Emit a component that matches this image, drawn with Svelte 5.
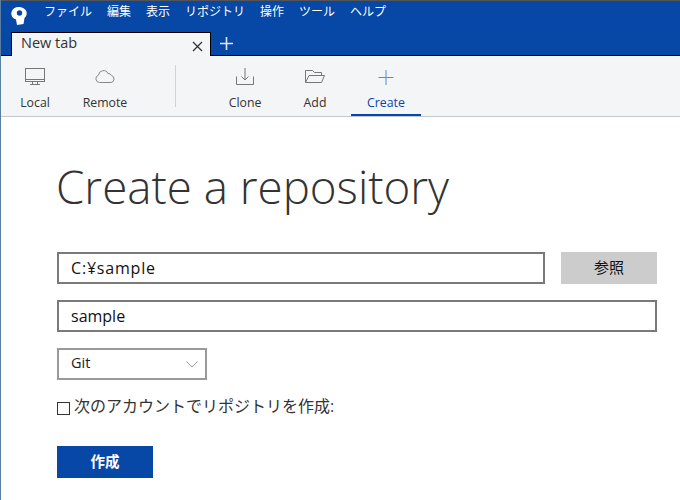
<script>
  const menus = ["ファイル", "編集", "表示", "リポジトリ", "操作", "ツール", "ヘルプ"];
</script>

<div class="window">
  <header class="titlebar">
    <div class="menubar">
      <svg class="logo" width="16" height="18" viewBox="0 0 16 18">
        <path d="M0.300 6.500a7.700 6.500 0 1 1 13.200 4.500l-1 6-6.500 1-1-5.500a7.700 6.500 0 0 1-4.700-6z" fill="#fff" />
        <circle cx="8.500" cy="6" r="2.700" fill="#0747a6" />
      </svg>
      <nav class="menus">
        {#each menus as m}
          <span>{m}</span>
        {/each}
      </nav>
    </div>
    <div class="tabstrip">
      <div class="tab">
        <span>New tab</span>
        <svg width="11" height="11" viewBox="0 0 11 11"><path d="M1 1l9 9M10 1l-9 9" stroke="#333" stroke-width="1.3" fill="none" /></svg>
      </div>
      <svg class="newtab" width="15" height="15" viewBox="0 0 15 15"><path d="M7.500 1v13M1 7.500h13" stroke="#dfe6f2" stroke-width="1.600" fill="none" /></svg>
    </div>
  </header>

  <div class="toolbar">
    <div class="group first">
      <div class="tool local">
        <svg width="22" height="20" viewBox="0 0 22 20" fill="none" stroke="#777" stroke-width="1">
          <rect x="1.500" y="1.500" width="19" height="13" />
          <path d="M1.500 12.500h19M8.500 15v2.500M13.500 15v2.500M6 17.500h10" />
        </svg>
        <span>Local</span>
      </div>
      <div class="tool remote">
        <svg width="22" height="20" viewBox="0 0 22 20" fill="none" stroke="#888" stroke-width="1">
          <path d="M5.500 15.500a3.800 3.800 0 0 1-1-7.400 5 5 0 0 1 9.500-1.600 3.500 3.500 0 0 1 3.500 2 3.600 3.600 0 0 1-0.500 7z" />
        </svg>
        <span>Remote</span>
      </div>
    </div>
    <div class="sep"></div>
    <div class="group second">
      <div class="tool clone">
        <svg width="20" height="20" viewBox="0 0 20 20" fill="none" stroke="#777" stroke-width="1">
          <path d="M1.500 9.500v8h17v-8M10 1v12M6.500 9.500L10 13l3.500-3.500" />
        </svg>
        <span>Clone</span>
      </div>
      <div class="tool add">
        <svg width="22" height="20" viewBox="0 0 22 20" fill="none" stroke="#777" stroke-width="1">
          <path d="M1.500 15.500v-12h7l2 2h7v3M1.500 15.500l3.500-7h15.500l-3 7z" />
        </svg>
        <span>Add</span>
      </div>
      <div class="tool create">
        <svg width="18" height="20" viewBox="0 0 18 20" fill="none" stroke="#4a90e2" stroke-width="1">
          <path d="M9 2v15M1.500 9.500h15" />
        </svg>
        <span>Create</span>
      </div>
    </div>
  </div>

  <main>
    <h1>Create a repository</h1>
    <div class="row">
      <input class="path" type="text" value="C:¥sample" />
      <button class="browse">参照</button>
    </div>
    <input class="name" type="text" value="sample" />
    <div class="select">
      <span>Git</span>
      <svg width="12" height="7" viewBox="0 0 12 7"><path d="M0.500 0.500L6 6l5.500-5.500" stroke="#999" fill="none" /></svg>
    </div>
    <label class="check">
      <span class="box"></span>
      <span class="check-text">次のアカウントでリポジトリを作成:</span>
    </label>
    <button class="submit">作成</button>
  </main>
</div>

<style>
  :global(body) {
    margin: 0;
    background: #fff;
    font-family: "Open Sans", "Noto Sans CJK JP", sans-serif;
  }

  .window {
    width: 680px;
    height: 500px;
    box-sizing: border-box;
    border-left: 1px solid #5b7fa3;
    overflow: hidden;
    font-family: "Open Sans", "Noto Sans CJK JP", sans-serif;
  }

  .titlebar {
    height: 56px;
    box-sizing: border-box;
    background: #0747a6;
    border-top: 1px solid #555;
    border-bottom: 1px solid #000;
    margin-left: -1px;
  }

  .menubar {
    height: 31px;
    display: flex;
    align-items: flex-start;
    padding-left: 11px;
  }

  .logo {
    margin-top: 6px;
  }

  .menus {
    display: flex;
    gap: 15px;
    margin-left: 17px;
    margin-top: 2px;
    font-size: 12px;
    line-height: 18px;
    color: #fff;
  }

  .tabstrip {
    display: flex;
    align-items: center;
    padding-left: 11px;
  }

  .tab {
    width: 200px;
    height: 24px;
    box-sizing: border-box;
    margin-bottom: -1px;
    background: #f4f5f7;
    border: 1px solid #000;
    border-bottom: 0;
    display: flex;
    align-items: center;
    justify-content: space-between;
    padding: 0 7px 4px 9px;
    font-size: 14.5px;
    line-height: 18px;
    color: #333;
  }

  .tab svg {
    margin-top: 7px;
  }

  .newtab {
    margin-left: 8px;
  }

  .toolbar {
    height: 61px;
    box-sizing: border-box;
    background: #f4f5f7;
    border-bottom: 1px solid #c1c7d0;
    display: flex;
    margin-left: -1px;
  }

  .group {
    display: flex;
  }

  .first {
    width: 175px;
  }

  .sep {
    width: 1px;
    height: 42px;
    margin-top: 9px;
    background: #d0d3d6;
  }

  .second {
    margin-left: 35px;
  }

  .tool {
    width: 70px;
    height: 60px;
    box-sizing: border-box;
    display: flex;
    flex-direction: column;
    align-items: center;
    justify-content: flex-end;
    gap: 7px;
    padding-bottom: 5px;
    font-size: 12.3px;
    line-height: 16px;
    color: #333;
  }

  .tool svg {
    position: relative;
    top: -1px;
  }

  .first .tool {
    width: 62px;
    margin-left: 4px;
  }

  .first .remote {
    width: 70px;
    margin-left: 4px;
  }

  .clone {
    margin-left: -1px;
  }

  .create {
    margin-left: 1px;
    color: #0747a6;
    border-bottom: 2px solid #0747a6;
    padding-bottom: 3px;
  }

  .tool.create svg {
    top: 0;
  }

  main {
    padding: 0 23px 0 56px;
  }

  h1 {
    margin: 43px 0 40px -1px;
    font-size: 45.7px;
    line-height: 52px;
    font-weight: 300;
    color: #333;
  }

  input {
    display: block;
    box-sizing: border-box;
    height: 32px;
    border: 2px solid #7a7a7a;
    border-radius: 0;
    padding: 0 12px;
    font: inherit;
    font-size: 16px;
    color: #111;
    background: #fff;
    outline: none;
  }

  .row {
    display: flex;
    justify-content: space-between;
    margin-bottom: 16px;
  }

  .path {
    width: 488px;
    letter-spacing: 0.8px;
  }

  .browse {
    width: 96px;
    height: 32px;
    border: 0;
    background: #ccc;
    font: inherit;
    font-size: 15px;
    padding: 0 0 3px;
    color: #111;
  }

  .name {
    width: 600px;
    margin-bottom: 16px;
  }

  .select {
    width: 150px;
    height: 32px;
    box-sizing: border-box;
    border: 2px solid #999;
    display: flex;
    align-items: center;
    justify-content: space-between;
    padding: 0 7px 0 12px;
    font-size: 14.5px;
    line-height: 20px;
    color: #222;
  }

  .select span {
    position: relative;
    top: -1px;
  }

  .check {
    display: flex;
    align-items: center;
    gap: 4px;
    margin-top: 16px;
    height: 24px;
    font-size: 16px;
    color: #333;
  }

  .check-text {
    line-height: 20px;
    padding-bottom: 5px;
  }

  .box {
    width: 11px;
    height: 11px;
    border: 1px solid #333;
  }

  .submit {
    display: block;
    width: 96px;
    height: 32px;
    margin-top: 26px;
    border: 0;
    background: #0747a6;
    color: #fff;
    font: inherit;
    font-size: 14.5px;
    font-weight: 700;
    padding: 0 0 3px;
  }
</style>
